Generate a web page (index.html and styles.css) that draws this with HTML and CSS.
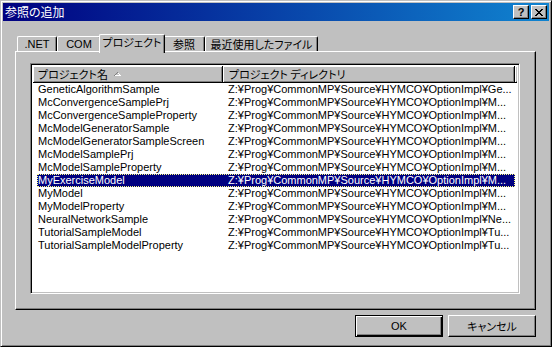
FILE: index.html
```html
<!DOCTYPE html>
<html lang="ja">
<head>
<meta charset="utf-8">
<title>参照の追加</title>
<link rel="stylesheet" href="styles.css">
</head>
<body>
<div class="window">
  <div class="titlebar">
    <span class="title jp">参照の追加</span>
    <div class="caption-buttons">
      <div class="cap-btn help">?</div>
      <div class="cap-btn close">
        <svg width="8" height="7" viewBox="0 0 8 7" shape-rendering="crispEdges">
          <path d="M0 0h2v1h-2zM6 0h2v1h-2zM1 1h2v1h-2zM5 1h2v1h-2zM2 2h4v1h-4zM3 3h2v1h-2zM2 4h4v1h-4zM1 5h2v1h-2zM5 5h2v1h-2zM0 6h2v1h-2zM6 6h2v1h-2z" fill="#000"/>
        </svg>
      </div>
    </div>
  </div>
  <div class="client">
    <div class="tabs">
      <div class="tab t-net">.NET</div>
      <div class="tab t-com">COM</div>
      <div class="tab t-proj active jp">プロジェクト</div>
      <div class="tab t-ref jp">参照</div>
      <div class="tab t-recent jp">最近使用したファイル</div>
    </div>
    <div class="panel">
      <div class="listview">
        <div class="header">
          <div class="hcol c1"><span class="jp">プロジェクト名</span><svg class="sort" width="7" height="4" viewBox="0 0 7 4" shape-rendering="crispEdges"><path d="M3 0h1v1h-1zM2 1h1v1h-1zM1 2h1v1h-1zM0 3h1v1h-1z" fill="#808080"/><path d="M4 1h1v1h-1zM5 2h1v1h-1zM6 3h1v1h-1zM1 3h5v1h-5z" fill="#ffffff"/></svg></div>
          <div class="hcol c2 jp">プロジェクト ディレクトリ</div>
          <div class="hcol filler"></div>
        </div>
        <div class="rows">
          <div class="row"><span class="cell name">GeneticAlgorithmSample</span><span class="cell path">Z:¥Prog¥CommonMP¥Source¥HYMCO¥OptionImpl¥Ge...</span></div>
          <div class="row"><span class="cell name">McConvergenceSamplePrj</span><span class="cell path">Z:¥Prog¥CommonMP¥Source¥HYMCO¥OptionImpl¥M...</span></div>
          <div class="row"><span class="cell name">McConvergenceSampleProperty</span><span class="cell path">Z:¥Prog¥CommonMP¥Source¥HYMCO¥OptionImpl¥M...</span></div>
          <div class="row"><span class="cell name">McModelGeneratorSample</span><span class="cell path">Z:¥Prog¥CommonMP¥Source¥HYMCO¥OptionImpl¥M...</span></div>
          <div class="row"><span class="cell name">McModelGeneratorSampleScreen</span><span class="cell path">Z:¥Prog¥CommonMP¥Source¥HYMCO¥OptionImpl¥M...</span></div>
          <div class="row"><span class="cell name">McModelSamplePrj</span><span class="cell path">Z:¥Prog¥CommonMP¥Source¥HYMCO¥OptionImpl¥M...</span></div>
          <div class="row"><span class="cell name">McModelSampleProperty</span><span class="cell path">Z:¥Prog¥CommonMP¥Source¥HYMCO¥OptionImpl¥M...</span></div>
          <div class="row selected"><span class="cell name">MyExerciseModel</span><span class="cell path">Z:¥Prog¥CommonMP¥Source¥HYMCO¥OptionImpl¥M...</span></div>
          <div class="row"><span class="cell name">MyModel</span><span class="cell path">Z:¥Prog¥CommonMP¥Source¥HYMCO¥OptionImpl¥M...</span></div>
          <div class="row"><span class="cell name">MyModelProperty</span><span class="cell path">Z:¥Prog¥CommonMP¥Source¥HYMCO¥OptionImpl¥M...</span></div>
          <div class="row"><span class="cell name">NeuralNetworkSample</span><span class="cell path">Z:¥Prog¥CommonMP¥Source¥HYMCO¥OptionImpl¥Ne...</span></div>
          <div class="row"><span class="cell name">TutorialSampleModel</span><span class="cell path">Z:¥Prog¥CommonMP¥Source¥HYMCO¥OptionImpl¥Tu...</span></div>
          <div class="row"><span class="cell name">TutorialSampleModelProperty</span><span class="cell path">Z:¥Prog¥CommonMP¥Source¥HYMCO¥OptionImpl¥Tu...</span></div>
        </div>
      </div>
    </div>
    <div class="buttons">
      <div class="btn default">OK</div>
      <div class="btn jp">キャンセル</div>
    </div>
  </div>
</div>
</body>
</html>
```

FILE: styles.css
```css
* { box-sizing: border-box; }
html, body { margin: 0; padding: 0; background: #ffffff; }
body {
  font-family: "Liberation Sans", "Noto Sans CJK JP", sans-serif;
  font-size: 11px;
  color: #000;
}
.jp {
  font-family: "Noto Sans CJK JP", sans-serif;
  font-feature-settings: "palt";
}

.window {
  width: 552px;
  height: 347px;
  background: #c0c0c0;
  border: 1px solid;
  border-color: #c0c0c0 #000 #000 #c0c0c0;
  box-shadow: inset 1px 1px #fff, inset -1px -1px #808080;
  padding: 2px;
  display: flex;
  flex-direction: column;
}

.titlebar {
  height: 18px;
  background: linear-gradient(to right, #000080, #1084d0);
  color: #fff;
  display: flex;
  align-items: center;
  padding: 0 2px;
}
.title { font-size: 12px; line-height: 18px; }
.caption-buttons { margin-left: auto; display: flex; gap: 2px; }
.cap-btn {
  width: 16px;
  height: 14px;
  background: #c0c0c0;
  border: 1px solid;
  border-color: #fff #000 #000 #fff;
  box-shadow: inset -1px -1px #808080;
  display: flex;
  align-items: center;
  justify-content: center;
  color: #000;
}
.cap-btn.help {
  font-family: "Liberation Sans", sans-serif;
  font-weight: bold;
  font-size: 11px;
  line-height: 12px;
  padding-bottom: 1px;
}

.client {
  flex: 1;
  padding: 13px 13px 0 12px;
  display: flex;
  flex-direction: column;
}

.tabs {
  height: 17px;
  margin-left: 2px;
  display: flex;
  align-items: flex-end;
}
.tab {
  height: 15px;
  background: #c0c0c0;
  border-top: 1px solid #fff;
  border-left: 1px solid #fff;
  border-right: 1px solid #000;
  border-radius: 2px 2px 0 0;
  box-shadow: inset -1px 0 #808080;
  display: flex;
  align-items: center;
  justify-content: center;
  line-height: 13px;
  white-space: nowrap;
}
.t-net { width: 40px; }
.t-com { width: 44px; }
.t-proj { width: 62px; }
.t-ref { width: 42px; }
.t-recent { width: 113px; }
.tab.active {
  width: 66px;
  height: 19px;
  margin: 0 -2px -2px -2px;
  padding-bottom: 3px;
  position: relative;
  z-index: 1;
}

.panel {
  width: 521px;
  height: 259px;
  border: 1px solid;
  border-color: #fff #000 #000 #fff;
  box-shadow: inset -1px -1px #808080;
  padding: 11px 0 0 14px;
}

.listview {
  width: 490px;
  height: 231px;
  background: #fff;
  border: 1px solid;
  border-color: #808080 #fff #fff #808080;
  box-shadow: inset 1px 1px #000, inset -1px -1px #c0c0c0;
  padding: 2px;
  display: flex;
  flex-direction: column;
}

.header {
  height: 17px;
  display: flex;
  flex-shrink: 0;
}
.hcol {
  height: 17px;
  background: #c0c0c0;
  border-right: 1px solid #000;
  border-bottom: 1px solid #000;
  box-shadow: inset 1px 1px #fff, inset -1px -1px #808080;
  display: flex;
  align-items: center;
  white-space: nowrap;
  line-height: 14px;
}
.hcol.c1 { width: 190px; padding-left: 5px; }
.hcol.c2 { width: 292px; padding-left: 6px; }
.hcol.filler { flex: 1; border-right: none; box-shadow: inset 1px 1px #fff, inset 0 -1px #808080; }
.sort { margin-left: 6px; margin-top: -1px; }

.rows { display: flex; flex-direction: column; }
.row {
  height: 13px;
  line-height: 13px;
  margin-left: 4px;
  width: 478px;
  display: flex;
  white-space: nowrap;
  overflow: hidden;
}
.cell.name { width: 186px; padding-left: 1px; overflow: hidden; }
.cell.path { padding-left: 5px; }
.row.selected {
  background: #000080;
  color: #fff;
  outline: 1px dotted #ffff80;
  outline-offset: -1px;
}

.buttons {
  margin-top: 5px;
  display: flex;
  justify-content: flex-end;
  gap: 5px;
}
.btn {
  width: 88px;
  height: 22px;
  background: #c0c0c0;
  border: 1px solid;
  border-color: #fff #000 #000 #fff;
  box-shadow: inset -1px -1px #808080;
  display: flex;
  align-items: center;
  justify-content: center;
  line-height: 14px;
}
.btn.default {
  border-color: #000;
  box-shadow: inset 1px 1px #fff, inset -1px -1px #000, inset -2px -2px #808080;
}
```
